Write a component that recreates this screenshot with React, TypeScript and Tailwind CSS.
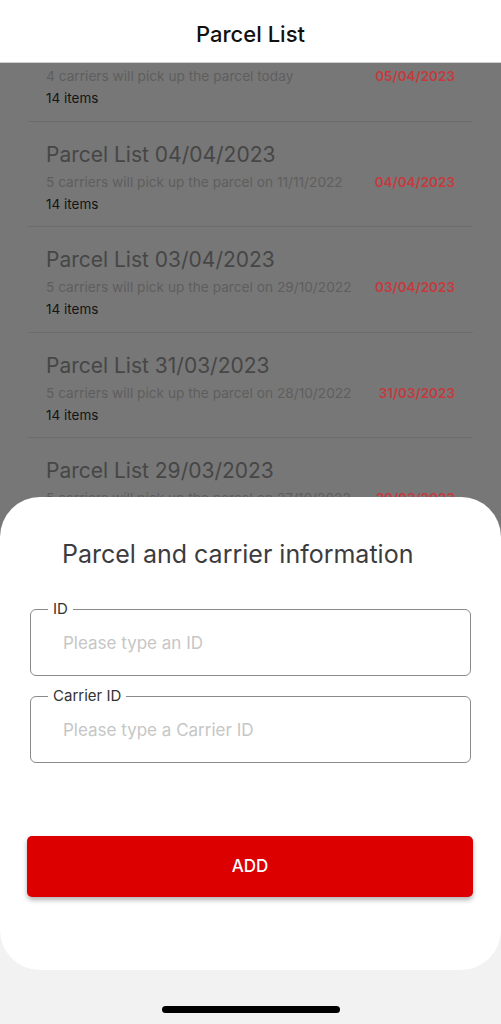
import React from "react";

const parcels = [
  { title: "Parcel List 05/04/2023", note: "4 carriers will pick up the parcel today", date: "05/04/2023" },
  { title: "Parcel List 04/04/2023", note: "5 carriers will pick up the parcel on 11/11/2022", date: "04/04/2023" },
  { title: "Parcel List 03/04/2023", note: "5 carriers will pick up the parcel on 29/10/2022", date: "03/04/2023" },
  { title: "Parcel List 31/03/2023", note: "5 carriers will pick up the parcel on 28/10/2022", date: "31/03/2023" },
  { title: "Parcel List 29/03/2023", note: "5 carriers will pick up the parcel on 27/10/2022", date: "29/03/2023" },
];

function ParcelRow({ title, note, date }: { title: string; note: string; date: string }) {
  return (
    <div className="mx-[28px] border-b border-[#6c6c6c] pt-[20px] pb-[12.5px] pl-[18px] pr-[18px]">
      <div className="text-[21px] leading-[26px] text-[#464646]">{title}</div>
      <div className="mt-[5px] flex items-center justify-between">
        <span className="text-[13.7px] leading-[18px] text-[#5e5e5e]">{note}</span>
        <span className="text-[13.5px] leading-[18px] font-semibold text-[#c63a3e]">{date}</span>
      </div>
      <div className="mt-[3px] text-[13.5px] leading-[20px] text-[#141414]">14 items</div>
    </div>
  );
}

function OutlinedField({ label, placeholder }: { label: string; placeholder: string }) {
  return (
    <fieldset className="h-[76px] rounded-[6px] border border-[#8a8a8a] pl-[17px] pr-4">
      <legend className="px-[5px] text-[15px] leading-[18px] text-[#333]">{label}</legend>
      <input
        placeholder={placeholder}
        className="mt-[14px] ml-[15px] w-[380px] bg-transparent text-[17px] leading-[22px] text-[#222] outline-none placeholder:text-[#c6c6c6]"
      />
    </fieldset>
  );
}

export default function App() {
  return (
    <div
      className="relative flex h-[1024px] w-full flex-col overflow-hidden bg-[#f2f2f2]"
      style={{ fontFamily: "Inter, 'Noto Sans', sans-serif" }}
    >
      {/* header */}
      <div className="flex h-[63px] items-center justify-center border-b border-[#cfcfcf] bg-white pt-[6px]">
        <span className="text-[22px] font-medium text-[#111]">Parcel List</span>
      </div>

      {/* list behind the sheet */}
      <div className="h-[475px] overflow-hidden bg-[#777777]">
        <div className="-mt-[47px]">
          {parcels.map((p) => (
            <ParcelRow key={p.title} {...p} />
          ))}
        </div>
      </div>

      {/* sheet */}
      <div className="absolute left-0 right-0 top-[497px] h-[473px] rounded-[40px] bg-white px-[30px] pt-[40px]">
        <h2 className="pl-[32px] text-[25px] leading-[34px] text-[#3c3c3e]">Parcel and carrier information</h2>
        <div className="mt-[29px] flex flex-col gap-[11px]">
          <OutlinedField label="ID" placeholder="Please type an ID" />
          <OutlinedField label="Carrier ID" placeholder="Please type a Carrier ID" />
        </div>
        <button className="-mx-[3px] mt-[73px] flex h-[61px] w-[446px] items-center justify-center rounded-[5px] bg-[#dc0000] text-[17px] font-medium text-white shadow-[0_3px_5px_rgba(0,0,0,0.3)]">
          ADD
        </button>
      </div>

      {/* home indicator */}
      <div className="absolute bottom-[11px] left-[162px] h-[7px] w-[178px] rounded-full bg-black" />
    </div>
  );
}
